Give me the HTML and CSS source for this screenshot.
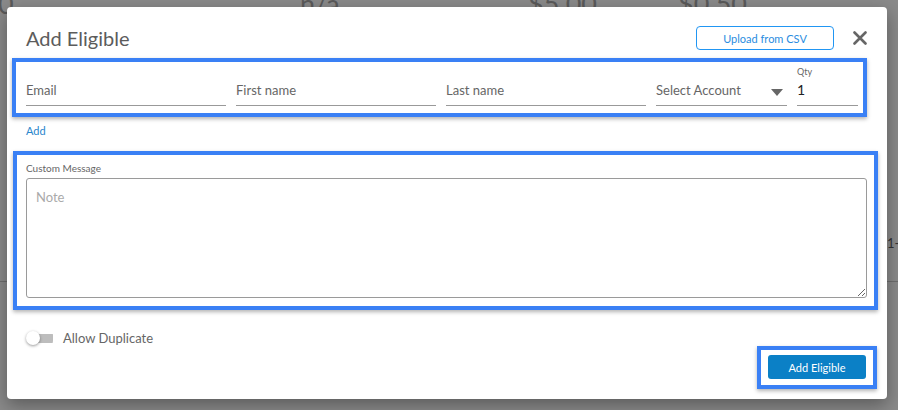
FILE: index.html
```html
<!DOCTYPE html>
<html lang="en">
  <head>
    <meta charset="UTF-8" />
    <meta name="viewport" content="width=device-width, initial-scale=1.0" />
    <title>Add Eligible</title>
    <link rel="stylesheet" href="styles.css">
  </head>
  <body>
    <div class="page">
      <div class="bg-row">
        <span class="c1">0</span>
        <span class="c2">n/a</span>
        <span class="c3">$5.00</span>
        <span class="c4">$0.50</span>
      </div>
      <div class="bg-side">1-</div>
      <div class="bg-line"></div>
    </div>

    <div class="modal">
      <div class="modal-head">
        <h1>Add Eligible</h1>
        <button class="btn-outline">Upload from CSV</button>
        <span class="close">
          <svg width="14" height="14" viewBox="0 0 14 14"><path d="M1.5 1.5 L12.5 12.5 M12.5 1.5 L1.5 12.5" stroke="#666" stroke-width="2.6" stroke-linecap="round"/></svg>
        </span>
      </div>

      <div class="mark mark-fields">
        <div class="fields">
          <div class="field"><div class="lbl"></div><div class="inp">Email</div></div>
          <div class="field"><div class="lbl"></div><div class="inp">First name</div></div>
          <div class="field"><div class="lbl"></div><div class="inp">Last name</div></div>
          <div class="field"><div class="lbl"></div><div class="inp select">Select Account <span class="caret"></span></div></div>
          <div class="field"><div class="lbl">Qty</div><div class="inp value">1</div></div>
        </div>
      </div>

      <a class="add-link">Add</a>

      <div class="mark mark-msg">
        <div class="msg-label">Custom Message</div>
        <textarea class="textarea" placeholder="Note"></textarea>
      </div>

      <div class="toggle-row">
        <span class="toggle"><span class="knob"></span></span>
        <span>Allow Duplicate</span>
      </div>

      <div class="foot">
        <div class="mark mark-btn">
          <button class="btn-primary">Add Eligible</button>
        </div>
      </div>
    </div>
  </body>
</html>
```

FILE: styles.css
```css
body {
  margin: 0;
  height: 410px;
  overflow: hidden;
  background: #8a8a8a;
  font-family: Lato, "Noto Sans", sans-serif;
}
.page {
  height: 410px;
  position: relative;
}
.bg-row {
  height: 20px;
  margin-top: -11px;
  font-size: 27px;
  line-height: 30px;
  color: #5a5a5a;
  display: flex;
}
.bg-row .c1 { margin-left: -2px; width: 302px; }
.bg-row .c2 { width: 228px; }
.bg-row .c3 { width: 150px; }
.bg-side {
  margin: 226px 0 0 887px;
  font-size: 13px;
  color: #333;
}
.bg-line {
  margin-top: 30px;
  height: 1px;
  background: #6e6e6e;
}
.modal {
  position: absolute;
  left: 7px;
  top: 7px;
  width: 880px;
  height: 392px;
  box-sizing: border-box;
  padding: 19px 0 10px;
  background: white;
  border-radius: 4px;
  box-shadow: 0 6px 18px rgba(0, 0, 0, 0.35);
  display: flex;
  flex-direction: column;
}
.modal-head {
  display: flex;
  align-items: center;
  height: 24px;
  padding: 0 20px 0 19px;
}
.modal-head h1 {
  margin: 0;
  flex: 1;
  font-size: 20px;
  font-weight: 400;
  color: #5c5c5c;
}
.btn-outline {
  width: 138px;
  height: 24px;
  border: 1px solid #2196f3;
  border-radius: 4px;
  background: white;
  color: #2a8de0;
  font-family: inherit;
  font-size: 11px;
  margin-right: 19px;
}
.close {
  display: flex;
}
.mark {
  border: 4px solid #3a80f5;
  box-shadow: 0 2px 4px rgba(0, 0, 0, 0.3);
}
.mark-fields {
  margin: 8px 20px 0 5px;
  padding: 4px 5px 7px 10px;
}
.fields {
  display: grid;
  grid-template-columns: 1fr 1fr 1fr 131px 61px;
  gap: 10px;
}
.lbl {
  height: 12px;
  font-size: 9px;
  line-height: 12px;
  color: #666;
}
.inp {
  height: 28px;
  box-sizing: border-box;
  padding-bottom: 4px;
  border-bottom: 1px solid #999;
  font-size: 13px;
  color: #666;
  display: flex;
  align-items: center;
}
.inp.value {
  color: #222;
  font-size: 14px;
}
.select {
  justify-content: space-between;
}
.caret {
  width: 0;
  height: 0;
  border-left: 6px solid transparent;
  border-right: 6px solid transparent;
  border-top: 7px solid #666;
  margin-right: 4px;
  margin-top: 5px;
}
.add-link {
  margin: 7px 0 0 19px;
  line-height: 14px;
  font-size: 11px;
  color: #2a86cc;
}
.mark-msg {
  margin: 13px 9px 0 6px;
  padding: 6px 7px 8px 9px;
}
.msg-label {
  height: 14px;
  line-height: 14px;
  font-size: 10px;
  color: #666;
  margin-bottom: 3px;
}
.textarea {
  display: block;
  width: 100%;
  height: 120px;
  box-sizing: border-box;
  border: 1px solid #9a9a9a;
  border-radius: 3px;
  padding: 10px 9px;
  margin: 0;
  font-family: inherit;
  font-size: 13px;
  color: #333;
  resize: vertical;
}
.textarea::placeholder {
  color: #aaa;
}
.toggle-row {
  margin: 20px 0 0 19px;
  height: 16px;
  display: flex;
  align-items: center;
  font-size: 13px;
  color: #666;
}
.toggle {
  width: 27px;
  height: 16px;
  margin-right: 10px;
  display: flex;
  align-items: center;
  background: linear-gradient(#bdbdbd, #bdbdbd) 6px 4px / 21px 9px no-repeat;
  border-radius: 5px;
}
.knob {
  width: 14px;
  height: 14px;
  border-radius: 50%;
  background: white;
  box-shadow: 0 1px 3px rgba(0, 0, 0, 0.4);
}
.foot {
  display: flex;
  justify-content: flex-end;
}
.mark-btn {
  margin-right: 10px;
  padding: 5px 7px 6px;
}
.btn-primary {
  display: block;
  width: 98px;
  height: 24px;
  border: none;
  border-radius: 3px;
  background: #0b80c6;
  color: white;
  font-family: inherit;
  font-size: 11px;
}
```
